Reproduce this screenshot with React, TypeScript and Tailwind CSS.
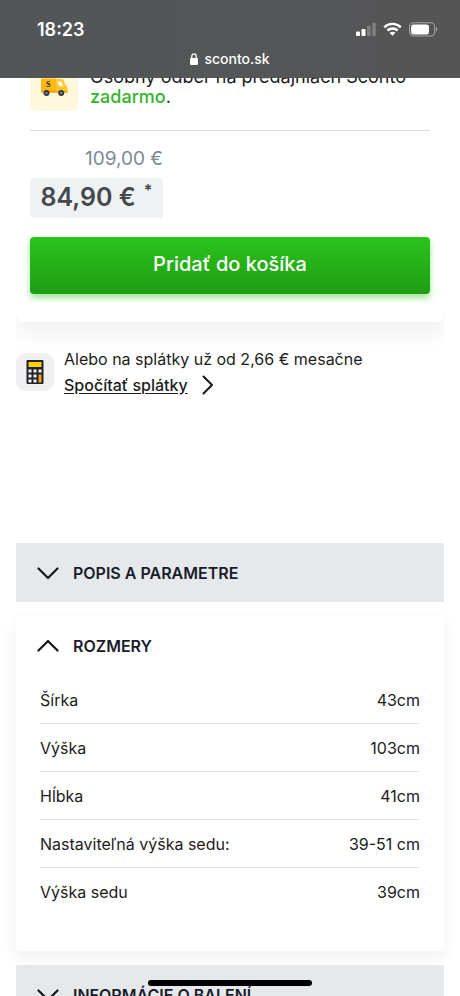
import { useState } from 'react';

const dimensions = [
  { label: 'Šírka', value: '43cm' },
  { label: 'Výška', value: '103cm' },
  { label: 'Hĺbka', value: '41cm' },
  { label: 'Nastaviteľná výška sedu:', value: '39-51 cm' },
  { label: 'Výška sedu', value: '39cm' },
];

function Chevron({ up = false }: { up?: boolean }) {
  return (
    <svg
      viewBox="0 0 22 14"
      className={`h-[14px] w-[22px] shrink-0 ${up ? 'rotate-180' : ''}`}
      fill="none"
      stroke="#14161c"
      strokeWidth="2.2"
      strokeLinecap="round"
      strokeLinejoin="round"
      aria-hidden="true"
    >
      <path d="M1.5 2.5 L11 12 L20.5 2.5" />
    </svg>
  );
}

function StatusBar() {
  return (
    <header className="fixed inset-x-0 top-0 z-20 h-[78px] bg-linear-to-r from-[#525658] to-[#555556] text-white">
      <div className="flex h-[46px] items-end justify-between pr-[22px] pl-[37px]">
        <span className="text-[18px] leading-8 font-semibold">18:23</span>
        <div className="flex h-[34px] items-center gap-[7px]">
          <svg viewBox="0 0 20 14" className="h-[14px] w-[20px]" fill="#fff" aria-hidden="true">
            <rect x="0" y="9.5" width="4" height="4.5" rx="1" />
            <rect x="5.5" y="7" width="4" height="7" rx="1" />
            <rect x="11" y="3.8" width="3.6" height="10.2" rx="1" opacity="0.25" />
            <rect x="16.2" y="0.5" width="3.6" height="13.5" rx="1" opacity="0.25" />
          </svg>
          <svg viewBox="0 0 20 14" className="h-[14px] w-[19px]" aria-hidden="true">
            <g fill="none" stroke="#fff" strokeWidth="2.6">
              <path d="M1.3 5.2 C6.2 0.4 13.8 0.4 18.7 5.2" />
              <path d="M4.6 8.6 C7.7 5.7 12.3 5.7 15.4 8.6" />
            </g>
            <path d="M10 14 L6.9 10.9 C8.6 9.4 11.4 9.4 13.1 10.9 Z" fill="#fff" />
          </svg>
          <svg viewBox="0 0 30 15" className="h-[15px] w-[29px]" aria-hidden="true">
            <rect x="0.6" y="0.6" width="26" height="13.6" rx="4" fill="none" stroke="#a4a5a6" strokeWidth="1.1" />
            <rect x="2.2" y="2.2" width="18.5" height="10.4" rx="2.6" fill="#fff" />
            <path d="M28 5 C29.8 5.6 29.8 9.2 28 9.8 Z" fill="#a4a5a6" />
          </svg>
        </div>
      </div>
      <div className="flex h-[26px] items-center justify-center gap-[6px]">
        <svg viewBox="0 0 8 12" className="h-[12px] w-[8px]" aria-hidden="true">
          <rect x="0" y="5" width="8" height="7" rx="1.2" fill="#fff" />
          <path d="M1.8 5.5 V3.2 C1.8 0.1 6.2 0.1 6.2 3.2 V5.5" fill="none" stroke="#fff" strokeWidth="1.3" />
        </svg>
        <span className="text-[14px] leading-5 font-medium">sconto.sk</span>
      </div>
    </header>
  );
}

function VanIcon() {
  return (
    <svg viewBox="0 0 28 20" className="h-[20px] w-[28px]" aria-hidden="true">
      <path d="M1 1.5 H16 V15.5 H2.5 Q1 15.5 1 14 Z" fill="#fdb913" />
      <path d="M16 2 H21.5 Q23 2 23.7 3.5 L25.4 8 Q27.6 8.8 27.6 11 V15.5 H16 Z" fill="#ffc629" />
      <path d="M17.5 4.5 H21.3 L23.3 9.2 H19.5 Q17.5 8 17.5 4.5 Z" fill="#fffaf0" />
      <rect x="1" y="14" width="26.6" height="1.5" fill="#f59b0b" />
      <text x="6" y="10" fontSize="8" fontWeight="700" fontFamily="Liberation Serif, serif" fill="#2b2521">
        S
      </text>
      <circle cx="6.5" cy="16" r="3" fill="#343a46" />
      <circle cx="6.5" cy="16" r="1.1" fill="#8a93a0" />
      <circle cx="21.2" cy="16" r="3" fill="#343a46" />
      <circle cx="21.2" cy="16" r="1.1" fill="#8a93a0" />
    </svg>
  );
}

function CalculatorIcon() {
  return (
    <svg viewBox="0 0 18 26" className="h-[26px] w-[18px]" aria-hidden="true">
      <rect x="0.5" y="1" width="17" height="24" rx="1" fill="#23222b" />
      <rect x="2.5" y="3" width="13" height="5" fill="#fdd005" />
      <g fill="#f3f3f5">
        <rect x="2.5" y="10.5" width="3" height="3" />
        <rect x="7.5" y="10.5" width="3" height="3" />
        <rect x="12.5" y="10.5" width="3" height="3" />
        <rect x="2.5" y="15.5" width="3" height="3" />
        <rect x="7.5" y="15.5" width="3" height="3" />
        <rect x="2.5" y="20.5" width="3" height="3" />
        <rect x="7.5" y="20.5" width="3" height="3" />
      </g>
      <rect x="12.5" y="15.5" width="3" height="8" fill="#f5a314" />
    </svg>
  );
}

function SectionButton({ title, open, onClick }: { title: string; open: boolean; onClick: () => void }) {
  return (
    <button
      type="button"
      aria-expanded={open}
      onClick={onClick}
      className={`flex h-[59px] w-full items-center gap-[14px] px-[21px] text-left text-[16px] font-semibold text-[#1b1c2b] ${
        open ? '' : 'bg-[#e6e9ec]'
      }`}
    >
      <Chevron up={open} />
      {title}
    </button>
  );
}

export default function App() {
  const [sizesOpen, setSizesOpen] = useState(true);

  return (
    <div className="h-screen overflow-hidden bg-white font-['Inter','Liberation_Sans',sans-serif] text-[#1b1c20]">
      <StatusBar />

      <main className="px-4 pt-[63px]">
        {/* Price and delivery, its shadow shows only below the card */}
        <section className="rounded-b-lg px-[14px] pb-7 shadow-[0_10px_24px_rgba(30,40,60,0.08)] [clip-path:inset(0_0_-40px_0)]">
          <div className="flex gap-3 border-b border-[#dcdfe1] pb-[19px]">
            <div className="flex h-12 w-12 shrink-0 items-center justify-center rounded bg-[#fff8dc]">
              <VanIcon />
            </div>
            <p className="pt-1 text-[18px] leading-5">
              Osobný odber na predajniach Sconto
              <br />
              <span className="font-medium text-[#35b32b]">zadarmo</span>.
            </p>
          </div>

          <div className="flex w-[133px] flex-col pt-4">
            <span className="text-right text-[19px] leading-6 text-[#7b8a91]">109,00 €</span>
            <span className="mt-[7px] flex h-10 items-center justify-center gap-2 rounded bg-[#eff2f3] text-[25px] font-semibold text-[#45484d]">
              84,90 €<sup className="text-[16px]">*</sup>
            </span>
          </div>

          <button
            type="button"
            className="mt-[19px] h-[57px] w-full rounded bg-linear-to-b from-[#2cc41c] to-[#1f9c15] pb-1 text-[20px] font-medium text-white shadow-[0_4px_6px_rgba(60,210,50,0.5)]"
          >
            Pridať do košíka
          </button>
        </section>

        {/* Instalments */}
        <section className="flex items-center gap-[10px] pt-6">
          <div className="flex h-[38px] w-[38px] shrink-0 items-center justify-center rounded-[10px] bg-[#f0f0f2]">
            <CalculatorIcon />
          </div>
          <div className="text-[16px] leading-[26px]">
            <p>Alebo na splátky už od 2,66 € mesačne</p>
            <a href="#splatky" className="flex items-center gap-[14px] font-medium">
              <span className="underline underline-offset-2">Spočítať splátky</span>
              <svg viewBox="0 0 12 20" className="h-[20px] w-[12px]" fill="none" stroke="#14161c" strokeWidth="2" aria-hidden="true">
                <path d="M1.5 1.5 L10 10 L1.5 18.5" strokeLinecap="round" strokeLinejoin="round" />
              </svg>
            </a>
          </div>
        </section>

        {/* Accordion */}
        <div className="mt-[145px] flex flex-col gap-[14px]">
          <SectionButton title="POPIS A PARAMETRE" open={false} onClick={() => {}} />

          <section className="rounded shadow-[0_6px_16px_rgba(30,40,60,0.07)]">
            <SectionButton title="ROZMERY" open={sizesOpen} onClick={() => setSizesOpen(!sizesOpen)} />
            {sizesOpen && (
              <div className="px-6 pb-9">
                <table className="w-full text-[16px]">
                  <tbody>
                    {dimensions.map((row) => (
                      <tr key={row.label} className="h-12 border-b border-[#e2e4e6] last:border-b-0">
                        <th scope="row" className="pt-[2px] text-left font-normal">
                          {row.label}
                        </th>
                        <td className="pt-[2px] text-right">{row.value}</td>
                      </tr>
                    ))}
                  </tbody>
                </table>
              </div>
            )}
          </section>

          <SectionButton title="INFORMÁCIE O BALENÍ" open={false} onClick={() => {}} />
        </div>
      </main>

      {/* Home indicator */}
      <div className="fixed bottom-[10px] left-1/2 z-20 h-[6px] w-[164px] -translate-x-1/2 rounded-full bg-black" />
    </div>
  );
}
